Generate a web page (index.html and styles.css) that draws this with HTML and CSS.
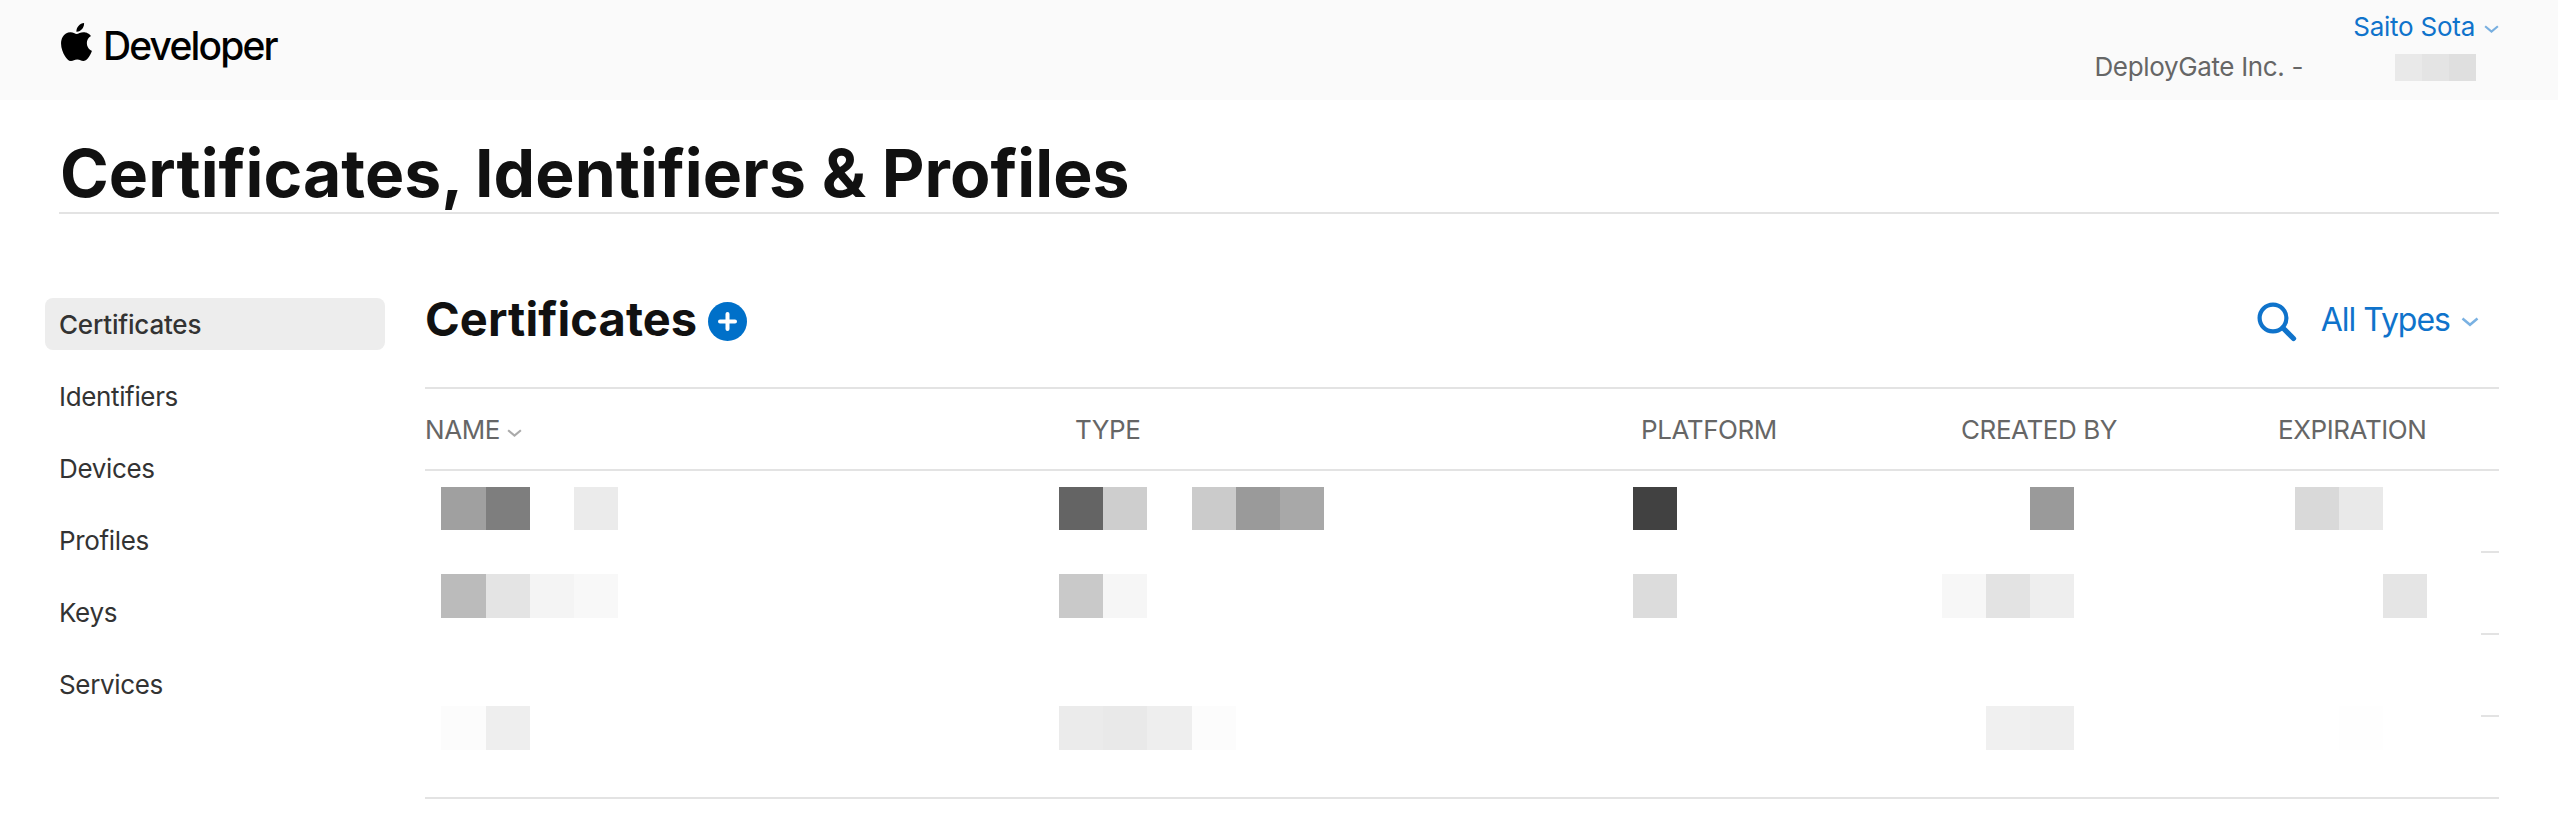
FILE: index.html
```html
<!DOCTYPE html>
<html lang="en">
<head>
  <meta charset="UTF-8" />
  <meta name="viewport" content="width=device-width, initial-scale=1.0"/>
  <title>Certificates, Identifiers &amp; Profiles - Apple Developer</title>
  <link rel="stylesheet" href="styles.css">
</head>
<body>
  <header class="topbar">
    <a class="brand" href="#">
      <svg class="brand-logo" viewBox="2.2 0 19.6 24" aria-hidden="true">
        <path d="M12.152 6.896c-.948 0-2.415-1.078-3.96-1.04-2.04.027-3.91 1.183-4.961 3.014-2.117 3.675-.546 9.103 1.519 12.09 1.013 1.454 2.208 3.09 3.792 3.039 1.52-.065 2.09-.987 3.935-.987 1.831 0 2.35.987 3.96.948 1.637-.026 2.676-1.48 3.676-2.948 1.156-1.688 1.636-3.325 1.662-3.415-.039-.013-3.182-1.221-3.22-4.857-.026-3.04 2.48-4.494 2.597-4.559-1.429-2.09-3.623-2.324-4.39-2.376-2-.156-3.675 1.09-4.61 1.09zM15.53 3.83c.843-1.012 1.4-2.427 1.245-3.83-1.207.052-2.662.805-3.532 1.818-.78.896-1.454 2.338-1.273 3.714 1.338.104 2.715-.688 3.559-1.701"/>
      </svg>
      <span class="brand-name">Developer</span>
    </a>
    <div class="account">
      <a class="account-name" href="#">
        <span class="account-user">Saito Sota</span>
        <svg class="chevron" viewBox="0 0 14 8"><path d="M1 1.2l6 5 6-5"/></svg>
      </a>
      <div class="account-team">
        <span class="team-name">DeployGate Inc. -</span>
        <span class="team-id"><i></i><i></i><i></i></span>
      </div>
    </div>
  </header>

  <h1 class="page-title"><span>Certificates,</span> Identifiers &amp; Profiles</h1>

  <div class="layout">
    <nav class="sidebar">
      <a class="active" href="#">Certificates</a>
      <a href="#">Identifiers</a>
      <a href="#">Devices</a>
      <a href="#">Profiles</a>
      <a href="#">Keys</a>
      <a href="#">Services</a>
    </nav>

    <main class="content">
      <div class="toolbar">
        <h2>Certificates</h2>
        <a class="add" href="#" aria-label="Add">
          <svg viewBox="0 0 39 39"><circle cx="19.5" cy="19.5" r="19.5"/><path d="M19.5 12v15M12 19.5h15"/></svg>
        </a>
        <div class="filters">
          <svg class="search" viewBox="0 0 40 40"><circle cx="16" cy="16" r="13.4"/><path d="M26 26l10.5 10.5"/></svg>
          <a class="types" href="#">
            <span>All Types</span>
            <svg class="chevron" viewBox="0 0 14 8"><path d="M1 1.2l6 5 6-5"/></svg>
          </a>
        </div>
      </div>

      <div class="table">
        <div class="row head">
          <span>NAME <svg class="chevron" viewBox="0 0 14 8"><path d="M1 1.2l6 5 6-5"/></svg></span>
          <span>TYPE</span>
          <span>PLATFORM</span>
          <span>CREATED BY</span>
          <span>EXPIRATION</span>
        </div>
        <div class="row"></div>
        <div class="row"></div>
        <div class="row"></div>
        <div class="row"></div>
        <div class="mosaic" id="mosaic"></div>
      </div>
    </main>
  </div>

  <script>
    // [row, first column, shades...]
    const blocks = [
      [1, 1, '#a0a0a0', '#7e7e7e'],
      [1, 4, '#ebebeb'],
      [1, 15, '#646464', '#cecece'],
      [1, 18, '#cbcbcb', '#9a9a9a', '#a8a8a8'],
      [1, 28, '#414141'],
      [1, 37, '#9a9a9a'],
      [1, 43, '#d9d9d9', '#e9e9e9'],
      [3, 1, '#bbbbbb', '#e4e4e4', '#f4f4f4', '#f8f8f8'],
      [3, 15, '#c9c9c9', '#f6f6f6'],
      [3, 28, '#dcdcdc'],
      [3, 35, '#f7f7f7', '#e3e3e3', '#eeeeee'],
      [3, 45, '#e5e5e5'],
      [6, 1, '#fcfcfc', '#eeeeee'],
      [6, 15, '#ebebeb', '#e9e9e9', '#eeeeee', '#fcfcfc'],
      [6, 36, '#f0f0f0', '#eeeeee'],
      [6, 44, '#fefefe']
    ];
    const mosaic = document.getElementById('mosaic');
    blocks.forEach(function ([row, col, ...shades]) {
      shades.forEach(function (shade, i) {
        const cell = document.createElement('i');
        cell.style.gridArea = row + ' / ' + (col + i);
        cell.style.background = shade;
        mosaic.appendChild(cell);
      });
    });
  </script>
</body>
</html>
```
FILE: styles.css
```css
* {
  box-sizing: border-box;
}
body {
  margin: 0;
  font-family: Inter, 'Liberation Sans', sans-serif;
  font-size: 26px;
  line-height: 32px;
  letter-spacing: -0.35px;
  background: #fff;
  color: #333;
}
a {
  color: #0f73cb;
  text-decoration: none;
}
h1, h2 {
  margin: 0;
  color: #111;
}
.chevron {
  width: 15px;
  height: 8.5px;
  fill: none;
  stroke: currentColor;
  stroke-width: 2;
  opacity: 0.55;
}

/* top bar */
.topbar {
  display: flex;
  justify-content: space-between;
  height: 100px;
  padding: 0 59px 0 61px;
  background: #fafafa;
}
.brand {
  display: flex;
  align-items: flex-start;
  color: #000;
}
.brand-logo {
  width: 31px;
  height: 38px;
  margin-top: 23px;
}
.brand-name {
  margin: 22px 0 0 11px;
  font-size: 39px;
  line-height: 48px;
  font-weight: 500;
  letter-spacing: -1.85px;
}
.account {
  display: flex;
  flex-direction: column;
  align-items: flex-end;
  padding-top: 11px;
}
.account-name {
  display: flex;
  align-items: center;
  gap: 9px;
  letter-spacing: -0.25px;
}
.account-name .chevron {
  margin-top: 4px;
}
.account-team {
  display: flex;
  align-items: center;
  margin: 8px 23px 0 0;
  color: #666;
}
.team-id {
  display: flex;
  margin-left: 92px;
}
.team-id i {
  width: 27px;
  height: 27px;
  background: #e9e9e9;
}
.team-id i:nth-child(2) {
  background: #e4e4e4;
}
.team-id i:nth-child(3) {
  background: #dfdfdf;
}

/* title */
.page-title {
  height: 114px;
  margin: 0 59px;
  padding: 33px 0 0 1px;
  border-bottom: 2px solid #e3e3e3;
  font-size: 66px;
  line-height: 80px;
  font-weight: 700;
  letter-spacing: 0.05px;
}
.page-title span {
  margin-right: -4px;
}

.layout {
  display: flex;
  gap: 40px;
  padding: 84px 59px 0 45px;
}

/* sidebar */
.sidebar {
  display: flex;
  flex-direction: column;
  gap: 20px;
  width: 340px;
}
.sidebar a {
  height: 52px;
  padding: 0 14px;
  border-radius: 8px;
  line-height: 54px;
  color: #333;
}
.sidebar .active {
  background: #ededed;
  font-weight: 500;
  letter-spacing: -0.2px;
}

/* certificates */
.content {
  flex: 1;
}
.toolbar {
  display: flex;
  align-items: center;
  height: 89px;
  padding-bottom: 43px;
}
h2 {
  margin-top: -4px;
  font-size: 47px;
  line-height: 56px;
  font-weight: 700;
  letter-spacing: 0.1px;
}
.add {
  width: 39px;
  height: 39px;
  margin-left: 11px;
}
.add svg {
  display: block;
  fill: #0070c9;
  stroke: #fff;
  stroke-width: 4;
  stroke-linecap: round;
}
.add circle {
  stroke: none;
}
.filters {
  display: flex;
  align-items: center;
  margin-left: auto;
  padding-right: 20px;
}
.search {
  width: 40px;
  height: 40px;
  margin-top: 2px;
  fill: none;
  stroke: #0f73cb;
  stroke-width: 4.2;
  stroke-linecap: round;
}
.search path {
  stroke-width: 5.2;
}
.types {
  display: flex;
  align-items: center;
  gap: 11px;
  margin: -3px 0 0 24px;
  font-size: 32px;
  letter-spacing: -1px;
}
.types .chevron {
  width: 18px;
  height: 10px;
  margin-top: 5px;
}

.table {
  position: relative;
  border-top: 2px solid #e3e3e3;
}
.row {
  display: grid;
  grid-template-columns: 650px 566px 320px 317px 1fr;
  align-items: center;
  height: 82px;
  border-bottom: 2px solid #e3e3e3;
}
.head {
  padding-top: 2px;
  color: #666;
  letter-spacing: -0.42px;
}
.head .chevron {
  margin-bottom: 2px;
}

/* pixelated cover over the certificate rows */
.mosaic {
  position: absolute;
  top: 98px;
  left: 0;
  display: grid;
  grid-template-columns: repeat(46, 44.14px);
  grid-template-rows: 43px repeat(6, 44px);
  width: 2056px;
  padding-left: 16.4px;
  background: #fff;
}
```
